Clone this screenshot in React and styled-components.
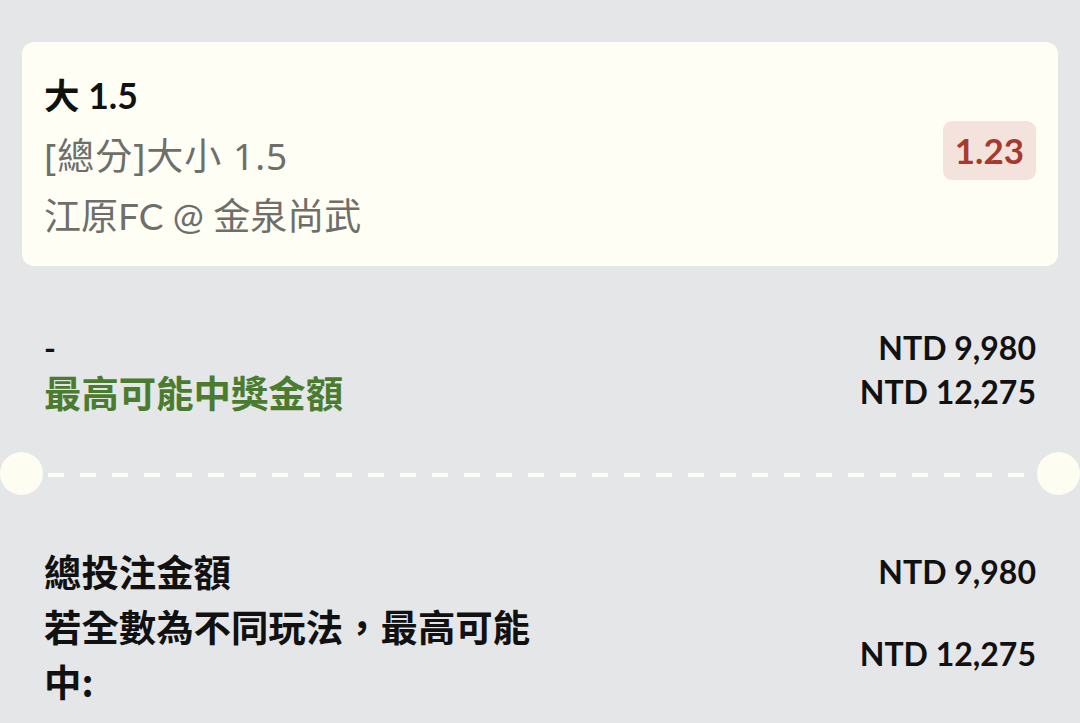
import React from "react";
import styled, { createGlobalStyle } from "styled-components";

const Global = createGlobalStyle`
  html, body { margin: 0; padding: 0; background: #e5e6e8; }
  body { font-family: Lato, "Noto Sans CJK TC", sans-serif; }
`;

const Page = styled.div`
  width: 1080px;
  height: 723px;
  box-sizing: border-box;
  padding: 42px 22px 0;
  overflow: hidden;
  background: #e5e6e8;
`;

const Card = styled.div`
  display: flex;
  align-items: center;
  justify-content: space-between;
  background: #fefef5;
  border-radius: 12px;
  padding: 24px 22px 20px;
`;

const Info = styled.div`
  display: flex;
  flex-direction: column;
`;

const InfoLine = styled.div`
  font-family: ${(p) => (p.$alt ? '"Noto Sans", "Noto Sans CJK TC", sans-serif' : 'Lato, "Noto Sans CJK TC", sans-serif')};
  font-size: ${(p) => (p.$title ? "35.5px" : "37px")};
  font-weight: ${(p) => (p.$title ? 700 : 400)};
  color: ${(p) => (p.$title ? "#111" : "#6e6e6b")};
  letter-spacing: ${(p) => (p.$alt ? "1px" : "0")};
  line-height: 60px;
  white-space: nowrap;
`;

const Odds = styled.div`
  background: #f4e3dc;
  color: #a63a2c;
  font-family: Lato, sans-serif;
  font-weight: 700;
  font-size: 35px;
  line-height: 59px;
  padding: 0 12px;
  border-radius: 9px;
  margin-bottom: 12px;
`;

const Section = styled.div`
  display: grid;
  grid-template-columns: 50% 1fr;
  align-items: center;
  padding: 0 22px;
  margin-top: ${(p) => p.$top}px;
`;

const Label = styled.div`
  font-family: "Noto Sans CJK TC", sans-serif;
  font-weight: 700;
  font-size: 37.4px;
  line-height: ${(p) => p.$lh || 44}px;
  color: ${(p) => p.$color || "#111"};
`;

const Dash = styled.div`
  font-family: Lato, sans-serif;
  font-weight: 700;
  font-size: 32px;
  line-height: 44px;
  color: #111;
`;

const Amount = styled.div`
  font-family: Lato, sans-serif;
  font-weight: 700;
  font-size: 32px;
  line-height: 44px;
  color: #111;
  text-align: right;
  white-space: nowrap;
`;

const Divider = styled.div`
  display: flex;
  align-items: center;
  margin: 38px -22px 0;
  height: 43px;
`;

const Notch = styled.div`
  width: 43px;
  height: 43px;
  border-radius: 50%;
  background: #fdfdf2;
  flex: none;
`;

const DashLine = styled.div`
  flex: 1;
  height: 4px;
  margin: 2px 4px 0 5px;
  background: repeating-linear-gradient(
    to right,
    #fdfdf5 0 16px,
    transparent 16px 32px
  );
`;

export default function App() {
  return (
    <>
      <Global />
      <Page>
        <Card>
          <Info>
            <InfoLine $title>大 1.5</InfoLine>
            <InfoLine $alt>[總分]大小 1.5</InfoLine>
            <InfoLine>江原FC @ 金泉尚武</InfoLine>
          </Info>
          <Odds>1.23</Odds>
        </Card>

        <Section $top={60}>
          <Dash>-</Dash>
          <Amount>NTD 9,980</Amount>
          <Label $color="#4b7b2f">最高可能中獎金額</Label>
          <Amount>NTD 12,275</Amount>
        </Section>

        <Divider>
          <Notch />
          <DashLine />
          <Notch />
        </Divider>

        <Section $top={49}>
          <Label $lh={55}>總投注金額</Label>
          <Amount>NTD 9,980</Amount>
          <Label $lh={55}>若全數為不同玩法，最高可能中:</Label>
          <Amount>NTD 12,275</Amount>
        </Section>
      </Page>
    </>
  );
}
